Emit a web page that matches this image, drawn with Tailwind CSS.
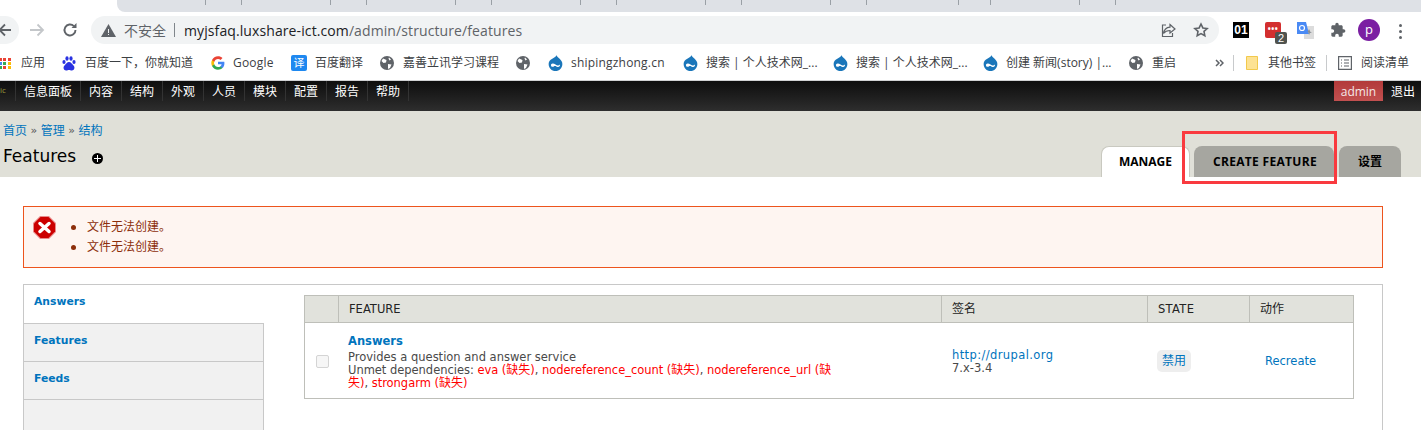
<!DOCTYPE html>
<html lang="zh-CN">
<head>
  <meta charset="UTF-8" />
  <title>Features</title>
  <script src="https://cdn.jsdelivr.net/npm/@tailwindcss/browser@4"></script>
</head>
<body class="relative w-[1421px] h-[430px] overflow-hidden bg-white font-['Open_Sans','Noto_Sans_CJK_SC',sans-serif]">

  <!-- tab strip -->
  <div class="h-[12px] pl-[117px] bg-white">
    <div class="h-full bg-[#dee1e6] rounded-bl-lg flex">
      <div class="w-[89px] border-r border-[#9aa0a6] h-[5px]"></div>
      <div class="w-[36px] border-r border-[#9aa0a6] h-[5px]"></div>
      <div class="w-[89px] border-r border-[#9aa0a6] h-[5px]"></div>
      <div class="w-[36px] border-r border-[#9aa0a6] h-[5px]"></div>
      <div class="w-[89px] border-r border-[#9aa0a6] h-[5px]"></div>
      <div class="w-[36px] border-r border-[#9aa0a6] h-[5px]"></div>
      <div class="w-[89px] border-r border-[#9aa0a6] h-[5px]"></div>
      <div class="w-[36px] border-r border-[#9aa0a6] h-[5px]"></div>
      <div class="w-[89px] border-r border-[#9aa0a6] h-[5px]"></div>
      <div class="w-[36px] border-r border-[#9aa0a6] h-[5px]"></div>
      <div class="w-[89px] border-r border-[#9aa0a6] h-[5px]"></div>
      <div class="w-[36px] border-r border-[#9aa0a6] h-[5px]"></div>
      <div class="w-[92px] border-r border-[#9aa0a6] h-[5px]"></div>
      <div class="w-[32px] border-r border-[#9aa0a6] h-[5px]"></div>
      <div class="w-[89px] border-r border-[#9aa0a6] h-[5px]"></div>
      <div class="w-[36px] border-r border-[#9aa0a6] h-[5px]"></div>
    </div>
  </div>

  <!-- toolbar -->
  <div class="h-[32px] flex items-start pt-[4px] bg-white">
    <div class="w-[19px] h-[28px] bg-[#f1f3f4] rounded-r-full flex items-center">
      <svg width="14" height="14" viewBox="0 0 14 14" class="-ml-[2px]" fill="none" stroke="#5f6368" stroke-width="1.8"><path d="M13 7H2M7 1.500 1.500 7 7 12.500"/></svg>
    </div>
    <svg width="16" height="14" viewBox="0 0 16 14" class="ml-[10px] mt-[7px]" fill="none" stroke="#c4c7ca" stroke-width="1.8"><path d="M1 7h13M8.500 1.500 14 7l-5.500 5.500"/></svg>
    <svg width="16" height="16" viewBox="0 0 16 16" class="ml-[17px] mt-[6px]" fill="none" stroke="#5f6368" stroke-width="1.900"><path d="M13.500 8a5.500 5.500 0 1 1-1.600-3.900"/><path d="M14.500 1v5h-5" fill="#5f6368" stroke="none"/></svg>
    <div class="ml-[13px] w-[1128px] h-[28px] bg-[#f1f3f4] rounded-full flex items-center pl-[10px] text-[14px]">
      <svg width="15" height="13" viewBox="0 0 15 13"><path d="M7.500 0 15 13H0z" fill="#5f6368"/><path d="M7 5h1v4H7zM7 10h1v1H7z" fill="#f1f3f4"/></svg>
      <span class="ml-[8px] text-[#5f6368]">不安全</span>
      <span class="ml-[8px] w-px h-[14px] bg-[#80868b]"></span>
      <span class="ml-[9px] text-[#202124] tracking-[0.1px]">myjsfaq.luxshare-ict.com<span class="text-[#5f6368]">/admin/structure/features</span></span>
      <svg width="15" height="15" viewBox="0 0 15 15" class="ml-auto" fill="none" stroke="#5f6368" stroke-width="1.200"><path d="M9 1.500 14 6 9 10V7.500c-3 0-5 1-6.500 3C3 7 5 4.500 9 4.200z"/><path d="M5 2H1.500v11.500h10V10"/></svg>
      <svg width="16" height="16" viewBox="0 0 24 24" class="ml-[17px] mr-[10px]" fill="none" stroke="#5f6368" stroke-width="2.400"><path d="m12 3 2.800 5.900 6.400.8-4.700 4.400 1.200 6.400L12 17.400l-5.700 3.100 1.200-6.400-4.700-4.400 6.400-.8z"/></svg>
    </div>
    <!-- extensions -->
    <div class="ml-[14px] mt-[6px] w-[16px] h-[16px] bg-black text-white text-[12px] font-bold leading-[16px] text-center font-['Liberation_Sans',sans-serif]">01</div>
    <div class="relative ml-[16px] mt-[6px] w-[16px] h-[16px] bg-[#d32f2f] rounded-[2px] flex items-start justify-center">
      <span class="text-white text-[8px] leading-[14px] font-bold tracking-[0.5px]">•••</span>
      <span class="absolute left-[10px] top-[10px] w-[12px] h-[12px] bg-[#50534f] rounded-[2px] text-white text-[11px] leading-[12px] text-center font-['Liberation_Sans',sans-serif]">2</span>
    </div>
    <svg width="17" height="17" viewBox="0 0 17 17" class="ml-[16px] mt-[6px]"><path d="M7 4h10v13H7z" fill="#dcdcdc"/><path d="M0 0h9l3 12H0z" fill="#4a8af4"/><circle cx="5" cy="6" r="2.500" fill="none" stroke="#fff" stroke-width="1.200"/><path d="m12 7 1.500 3 1.500.5-2 .5-1 2-.5-2.500-1-.5z" fill="#8a8f94"/></svg>
    <svg width="16" height="16" viewBox="0 0 24 24" class="ml-[16px] mt-[6px]" fill="#5f6368"><path d="M20.500 11H19V7c0-1.100-.9-2-2-2h-4V3.500C13 2.120 11.880 1 10.500 1S8 2.120 8 3.500V5H4c-1.100 0-1.990.9-1.990 2v3.800H3.500c1.490 0 2.700 1.210 2.700 2.700s-1.210 2.700-2.700 2.700H2V20c0 1.100.9 2 2 2h3.800v-1.500c0-1.490 1.210-2.700 2.700-2.700 1.490 0 2.700 1.210 2.700 2.700V22H17c1.100 0 2-.9 2-2v-4h1.500c1.380 0 2.500-1.120 2.500-2.500S21.880 11 20.500 11z"/></svg>
    <div class="ml-[12px] mt-[3px] w-[22px] h-[22px] rounded-full bg-[#7b1fa2] text-white text-[13px] leading-[20px] text-center">p</div>
    <div class="ml-[19px] mt-[8px] flex flex-col gap-[3px]">
      <span class="w-[3px] h-[3px] rounded-full bg-[#5f6368]"></span>
      <span class="w-[3px] h-[3px] rounded-full bg-[#5f6368]"></span>
      <span class="w-[3px] h-[3px] rounded-full bg-[#5f6368]"></span>
    </div>
  </div>

  <!-- bookmarks -->
  <div class="h-[37px] pt-[2px] border-b border-[#d0d1d3] flex items-center text-[12px] text-[#3c4043] bg-white whitespace-nowrap">
    <div class="w-[11px] overflow-hidden">
      <div class="grid grid-cols-3 gap-[1px] w-[12px] -ml-[1px]">
        <span class="w-[3px] h-[3px] bg-[#ea4335]"></span><span class="w-[3px] h-[3px] bg-[#ea4335]"></span><span class="w-[3px] h-[3px] bg-[#ea4335]"></span>
        <span class="w-[3px] h-[3px] bg-[#4285f4]"></span><span class="w-[3px] h-[3px] bg-[#34a853]"></span><span class="w-[3px] h-[3px] bg-[#fbbc05]"></span>
        <span class="w-[3px] h-[3px] bg-[#34a853]"></span><span class="w-[3px] h-[3px] bg-[#ea4335]"></span><span class="w-[3px] h-[3px] bg-[#fbbc05]"></span>
      </div>
    </div>
    <span class="ml-[10px] w-[24px]">应用</span>
    <svg width="14" height="15" viewBox="0 0 14 15" class="ml-[17px]" fill="#2932e1"><ellipse cx="2" cy="6" rx="1.600" ry="2"/><ellipse cx="5" cy="2.500" rx="1.600" ry="2.200"/><ellipse cx="9" cy="2.500" rx="1.600" ry="2.200"/><ellipse cx="12" cy="6" rx="1.600" ry="2"/><path d="M7 6c2 0 3 2 4.500 3.500 2 2 .5 5-1.500 5-1.500 0-2-.5-3-.5s-1.500.5-3 .5c-2 0-3.500-3-1.500-5C4 8 5 6 7 6z"/></svg>
    <span class="ml-[9px] w-[108px]">百度一下，你就知道</span>
    <svg width="14" height="14" viewBox="0 0 48 48" class="ml-[18px]"><path fill="#4285f4" d="M46 24.500c0-1.600-.1-3.100-.4-4.500H24v8.500h12.400c-.5 2.900-2.100 5.300-4.600 7v5.800h7.400C43.500 37.800 46 31.700 46 24.500z"/><path fill="#34a853" d="M24 47c6.200 0 11.400-2 15.200-5.600l-7.400-5.800c-2 1.400-4.700 2.200-7.800 2.200-6 0-11-4-12.800-9.500H3.500v6C7.300 41.800 15 47 24 47z"/><path fill="#fbbc05" d="M11.200 28.300c-.5-1.400-.7-2.800-.7-4.300s.3-3 .7-4.300v-6H3.500C2 16.900 1 20.300 1 24s.9 7.100 2.500 10.300z"/><path fill="#ea4335" d="M24 10.200c3.400 0 6.400 1.200 8.800 3.400l6.600-6.600C35.400 3.300 30.200 1 24 1 15 1 7.300 6.200 3.500 13.700l7.700 6C13 14.200 18 10.200 24 10.200z"/></svg>
    <span class="ml-[8px] w-[42px] tracking-[0.2px]">Google</span>
    <div class="ml-[16px] w-[16px] h-[16px] rounded-[2px] bg-[#1e88f0] text-white text-[11px] leading-[16px] text-center">译</div>
    <span class="ml-[8px] w-[48px]">百度翻译</span>
    <svg width="14" height="14" viewBox="0 0 14 14" class="ml-[17px]"><circle cx="7" cy="7" r="7" fill="#5f6368"/><path d="M3 2.500 6.500 4 6 6.500 3.500 7l-2-2zM8 8l3.500.5L10 12 8 13zM9 1.500l2 2-1.500 1L8.500 2.500z" fill="#fff"/></svg>
    <span class="ml-[9px] w-[96px]">嘉善立讯学习课程</span>
    <svg width="14" height="14" viewBox="0 0 14 14" class="ml-[17px]"><circle cx="7" cy="7" r="7" fill="#5f6368"/><path d="M3 2.500 6.500 4 6 6.500 3.500 7l-2-2zM8 8l3.500.5L10 12 8 13zM9 1.500l2 2-1.500 1L8.500 2.500z" fill="#fff"/></svg>
    <svg width="15" height="16" viewBox="0 0 15 16" class="ml-[18px]"><path d="M8.500 0c.3 2 4 3.500 5.500 7 1.500 4.500-2 9-6.500 9S-.5 11.500 1 7c1.500-3.500 7-4 7.500-7z" fill="#1a76ba"/><path d="M3 9.500c1-1.500 2.500-1.500 4.500 0s3.500 1 4.500 0c.3 1.500-1 3-2.500 2.500-1-.3-1.500-1-2.500-1s-1.500 1-3 .7C3.200 11.500 2.800 10.500 3 9.500z" fill="#fff"/></svg>
    <span class="ml-[8px] w-[94px] tracking-[0.2px]">shipingzhong.cn</span>
    <svg width="15" height="16" viewBox="0 0 15 16" class="ml-[18px]"><path d="M8.500 0c.3 2 4 3.500 5.500 7 1.500 4.500-2 9-6.500 9S-.5 11.500 1 7c1.500-3.500 7-4 7.500-7z" fill="#1a76ba"/><path d="M3 9.500c1-1.500 2.500-1.500 4.500 0s3.500 1 4.500 0c.3 1.500-1 3-2.500 2.500-1-.3-1.500-1-2.500-1s-1.500 1-3 .7C3.200 11.500 2.800 10.500 3 9.500z" fill="#fff"/></svg>
    <span class="ml-[8px] w-[110px]">搜索 | 个人技术网_...</span>
    <svg width="15" height="16" viewBox="0 0 15 16" class="ml-[17px]"><path d="M8.500 0c.3 2 4 3.500 5.500 7 1.500 4.500-2 9-6.500 9S-.5 11.500 1 7c1.500-3.500 7-4 7.500-7z" fill="#1a76ba"/><path d="M3 9.500c1-1.500 2.500-1.500 4.500 0s3.500 1 4.500 0c.3 1.500-1 3-2.500 2.500-1-.3-1.500-1-2.500-1s-1.500 1-3 .7C3.200 11.500 2.800 10.500 3 9.500z" fill="#fff"/></svg>
    <span class="ml-[8px] w-[110px]">搜索 | 个人技术网_...</span>
    <svg width="15" height="16" viewBox="0 0 15 16" class="ml-[17px]"><path d="M8.500 0c.3 2 4 3.500 5.500 7 1.500 4.500-2 9-6.500 9S-.5 11.500 1 7c1.500-3.500 7-4 7.500-7z" fill="#1a76ba"/><path d="M3 9.500c1-1.500 2.500-1.500 4.500 0s3.500 1 4.500 0c.3 1.500-1 3-2.500 2.500-1-.3-1.500-1-2.500-1s-1.500 1-3 .7C3.200 11.500 2.800 10.500 3 9.500z" fill="#fff"/></svg>
    <span class="ml-[8px] w-[105px]">创建 新闻(story) |...</span>
    <svg width="14" height="14" viewBox="0 0 14 14" class="ml-[18px]"><circle cx="7" cy="7" r="7" fill="#5f6368"/><path d="M3 2.500 6.500 4 6 6.500 3.500 7l-2-2zM8 8l3.500.5L10 12 8 13zM9 1.500l2 2-1.500 1L8.500 2.500z" fill="#fff"/></svg>
    <span class="ml-[9px] w-[24px]">重启</span>
    <svg width="9" height="8" viewBox="0 0 9 8" class="ml-[39px]" fill="none" stroke="#5f6368" stroke-width="1.500"><path d="m1 1 3 3-3 3M5 1l3 3-3 3"/></svg>
    <span class="ml-[9px] w-px h-[16px] bg-[#c8cacc]"></span>
    <svg width="12" height="14" viewBox="0 0 12 14" class="ml-[12px]"><path d="M.5.500h11v13H.5z" fill="#fde293" stroke="#f2c94c"/></svg>
    <span class="ml-[10px] w-[48px]">其他书签</span>
    <span class="ml-[10px] w-px h-[16px] bg-[#c8cacc]"></span>
    <svg width="14" height="14" viewBox="0 0 14 14" class="ml-[11px]" fill="none" stroke="#5f6368" stroke-width="1.200"><path d="M.6.600h12.800v12.800H.6zM3 4h1M3 7h1M3 10h1M6 4h5M6 7h5M6 10h5"/></svg>
    <span class="ml-[9px]">阅读清单</span>
  </div>

  <!-- admin toolbar -->
  <div class="h-[30px] flex text-[12px] text-white bg-gradient-to-b from-[#0e0e0e] to-[#2e2e2e]">
    <div class="w-[16px] h-[20px] border-r border-[#333] text-[8px] text-[#9b9b3a] leading-[18px] overflow-hidden flex-none">ic</div>
    <div class="w-[65px] h-[20px] pt-[2px] flex items-center justify-center border-r border-[#333]">信息面板</div>
    <div class="w-[41px] h-[20px] pt-[2px] flex items-center justify-center border-r border-[#333]">内容</div>
    <div class="w-[41px] h-[20px] pt-[2px] flex items-center justify-center border-r border-[#333]">结构</div>
    <div class="w-[41px] h-[20px] pt-[2px] flex items-center justify-center border-r border-[#333]">外观</div>
    <div class="w-[41px] h-[20px] pt-[2px] flex items-center justify-center border-r border-[#333]">人员</div>
    <div class="w-[41px] h-[20px] pt-[2px] flex items-center justify-center border-r border-[#333]">模块</div>
    <div class="w-[41px] h-[20px] pt-[2px] flex items-center justify-center border-r border-[#333]">配置</div>
    <div class="w-[41px] h-[20px] pt-[2px] flex items-center justify-center border-r border-[#333]">报告</div>
    <div class="w-[41px] h-[20px] pt-[2px] flex items-center justify-center border-r border-[#333]">帮助</div>
    <div class="ml-auto h-[20px] pt-[2px] w-[49px] flex items-center justify-center bg-gradient-to-b from-[#b23a3a] to-[#c25050] text-[#f5e8e8]">admin</div>
    <div class="h-[20px] pt-[2px] flex items-center pl-[8px] pr-[6px]">退出</div>
  </div>

  <!-- page header -->
  <div class="h-[66px] bg-[#e0e0d8] flex justify-between">
    <div class="pl-[3px] pt-[12px]">
      <div class="text-[12px] leading-[16px] text-[#555] font-['DejaVu_Sans','Noto_Sans_CJK_SC',sans-serif] flex gap-[3.500px]"><a class="text-[#0074bd]">首页</a><span class="text-[11px]">»</span><a class="text-[#0074bd]">管理</a><span class="text-[11px]">»</span><a class="text-[#0074bd]">结构</a></div>
      <div class="mt-[5px] flex items-center">
        <h1 class="w-[73px] text-[17px] leading-[24px] text-black whitespace-nowrap font-['DejaVu_Sans',sans-serif]">Features</h1>
        <span class="ml-[16px] mt-[4px] w-[11px] h-[11px] rounded-full bg-black relative">
          <span class="absolute left-[2px] top-[5px] w-[7px] h-px bg-white"></span>
          <span class="absolute left-[5px] top-[2px] w-px h-[7px] bg-white"></span>
        </span>
      </div>
    </div>
    <div class="flex items-end pr-[20px] text-[12px] font-bold text-black">
      <div class="h-[31px] w-[89px] bg-white rounded-t-lg border border-b-0 border-[#c9c9c0] flex items-center justify-center">MANAGE</div>
      <div class="ml-[4px] h-[31px] w-[140px] pl-[2px] bg-[#a6a6a0] rounded-t-lg flex items-center justify-center tracking-[0.3px]">CREATE FEATURE</div>
      <div class="ml-[5px] h-[31px] w-[62px] bg-[#a6a6a0] rounded-t-lg flex items-center justify-center">设置</div>
    </div>
  </div>

  <!-- content -->
  <div class="pl-[23px] pr-[38px] pt-[29px] font-['DejaVu_Sans','Noto_Sans_CJK_SC',sans-serif]">
    <div class="h-[62px] border border-[#ed541d] bg-[#fef5f1] flex text-[12px] text-[#8c2e0b]">
      <svg width="23" height="23" viewBox="0 0 23 23" class="ml-[9px] mt-[9px] flex-none">
        <path d="M7 0h9l7 7v9l-7 7H7l-7-7V7z" fill="#e88a8a"/>
        <path d="M7.500 1h8L22 7.500v8L15.500 22h-8L1 15.500v-8z" fill="#cc0000"/>
        <path d="M7 7.500 16 15.500M16 7.500 7 15.500" fill="none" stroke="#fff" stroke-width="3.500" stroke-linecap="round"/>
      </svg>
      <ul class="ml-[15px] pt-[10px] leading-[20px]">
        <li class="flex items-center"><span class="w-[5px] h-[5px] rounded-full bg-[#8c2e0b] mr-[11px]"></span>文件无法创建。</li>
        <li class="flex items-center"><span class="w-[5px] h-[5px] rounded-full bg-[#8c2e0b] mr-[11px]"></span>文件无法创建。</li>
      </ul>
    </div>

    <!-- vertical tabs panel -->
    <div class="mt-[16px] h-[146px] border border-b-0 border-[#c8c8c8] flex">
      <div class="w-[240px] flex-none flex flex-col text-[10.800px] font-bold text-[#0074bd]">
        <div class="h-[38px] pl-[10px] pt-[9px] leading-[15px] bg-white">Answers</div>
        <div class="h-[38px] pl-[10px] pt-[9px] leading-[15px] bg-[#f1f1f1] border-t border-r border-[#c8c8c8]">Features</div>
        <div class="h-[38px] pl-[10px] pt-[9px] leading-[15px] bg-[#f1f1f1] border-t border-r border-[#c8c8c8]">Feeds</div>
        <div class="flex-1 bg-[#f1f1f1] border-t border-r border-[#c8c8c8]"></div>
      </div>
      <div class="pl-[40px] pt-[10px]">
        <div class="w-[1050px] border border-[#bebfb9] text-[11.500px] text-[#494949]">
          <div class="h-[27px] flex items-stretch bg-[#e1e2dc] text-[#222] border-b border-[#bebfb9] leading-[26px]">
            <div class="w-[34px] border-r border-[#bebfb9]"></div>
            <div class="w-[603px] pl-[10px] border-r border-[#bebfb9]">FEATURE</div>
            <div class="w-[206px] pl-[10px] border-r border-[#bebfb9] text-[12px]">签名</div>
            <div class="w-[102px] pl-[10px] border-r border-[#bebfb9] tracking-[0.3px]">STATE</div>
            <div class="flex-1 pl-[10px] text-[12px]">动作</div>
          </div>
          <div class="h-[75px] flex">
            <div class="w-[34px] flex items-center justify-center">
              <span class="mt-[1px] w-[13px] h-[13px] border border-[#d4d4d4] rounded-[2px] bg-[#f6f6f6]"></span>
            </div>
            <div class="w-[603px] pl-[9px] pt-[11px] leading-[13px]">
              <div class="font-bold text-[#0074bd] leading-[15px] mb-[2px]">Answers</div>
              <div>Provides a question and answer service</div>
              <div class="w-[487px] tracking-[-0.03px]">Unmet dependencies: <span class="text-[#ff0000]">eva (<span class="text-[12px]">缺失</span>)</span>, <span class="text-[#ff0000]">nodereference_count (<span class="text-[12px]">缺失</span>)</span>, <span class="text-[#ff0000]">nodereference_url (<span class="text-[12px]">缺失</span>)</span>, <span class="text-[#ff0000]">strongarm (<span class="text-[12px]">缺失</span>)</span></div>
            </div>
            <div class="w-[206px] pl-[10px] pt-[26px] leading-[13px]">
              <div class="text-[#0074bd] tracking-[0.400px]">http://drupal.org</div>
              <div>7.x-3.4</div>
            </div>
            <div class="w-[102px] pl-[9px] pt-[27px]">
              <span class="block w-[34px] h-[22px] rounded-[5px] bg-[#eeeeee] text-[#0074bd] text-center text-[12px] leading-[22px]">禁用</span>
            </div>
            <div class="pl-[15px] pt-[32px] leading-[13px] text-[#0074bd]">Recreate</div>
          </div>
        </div>
      </div>
    </div>
  </div>

  <!-- red annotation drawn over the screenshot -->
  <div class="absolute left-[1182px] top-[131px] w-[155px] h-[53px] border-[3px] border-[#f93a3f]"></div>
</body>
</html>
